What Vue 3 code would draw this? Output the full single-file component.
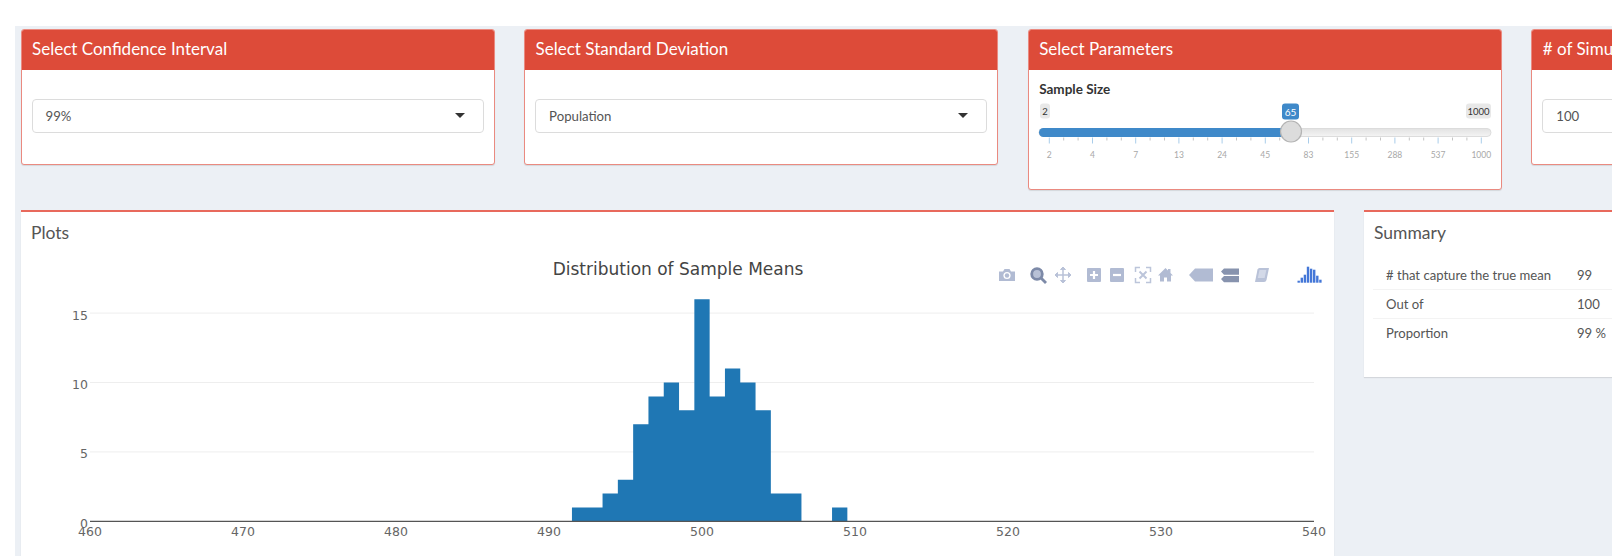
<script setup>
const inputs = [
  { title: 'Select Confidence Interval', value: '99%' },
  { title: 'Select Standard Deviation', value: 'Population' },
]
const majorLabels = ['2', '4', '7', '13', '24', '45', '83', '155', '288', '537', '1000']
const tickStep = 43.2
const tickStart = 1049.3
const sliderTicks = []
for (let i = 0; i <= 30; i++) {
  sliderTicks.push({ x: tickStart + (i * tickStep) / 3, major: i % 3 === 0 })
}
const sliderLabels = majorLabels.map((text, i) => ({ text, x: tickStart + i * tickStep }))

const rows = [
  ['# that capture the true mean', '99'],
  ['Out of', '100'],
  ['Proportion', '99 %'],
]

const X0 = 90
const XU = 15.3
const Y0 = 521.3
const YU = 13.88
const counts = [1, 1, 2, 3, 7, 9, 10, 8, 16, 9, 11, 10, 8, 2, 2, 0, 0, 1]
// one outline per run of adjacent bins, so no seams appear between bars
let barsPath = ''
let open = false
counts.forEach((c, i) => {
  const x = X0 + (31.5 + i) * XU
  if (c) {
    barsPath += `${open ? 'L' : 'M'}${x} ${open ? Y0 - c * YU : Y0}`
    if (!open) barsPath += `L${x} ${Y0 - c * YU}`
    barsPath += `L${x + XU} ${Y0 - c * YU}`
    open = true
  }
  if (open && (!c || i === counts.length - 1)) {
    const end = c ? x + XU : x
    barsPath += `L${end} ${Y0}Z`
    open = false
  }
})
const xTicks = [460, 470, 480, 490, 500, 510, 520, 530, 540].map((v) => ({
  v,
  x: X0 + (v - 460) * XU,
}))
const yTicks = [0, 5, 10, 15].map((v) => ({ v, y: Y0 - v * YU }))
const logo = [2, 5, 8, 16, 14, 13, 7, 3].map((h, i) => ({ x: 1297.5 + i * 3.1, y: 282.7 - h, h }))
</script>

<template>
  <div class="page">
    <div class="top-row">
      <section v-for="item in inputs" :key="item.title" class="box">
        <header class="box-head">{{ item.title }}</header>
        <div class="box-body">
          <div class="select">
            <span>{{ item.value }}</span>
            <i class="caret"></i>
          </div>
        </div>
      </section>

      <section class="box box-tall">
        <header class="box-head">Select Parameters</header>
        <div class="slider-body">
          <div class="slider-label">Sample Size</div>
          <svg class="slider" viewBox="1029 100 474 65" width="474" height="65">
            <defs>
              <linearGradient id="track" x1="0" y1="0" x2="0" y2="1">
                <stop offset="0" stop-color="#e2e2e2" />
                <stop offset="1" stop-color="#f4f4f4" />
              </linearGradient>
            </defs>
            <rect x="1039" y="129.5" width="452" height="8" rx="4" fill="url(#track)" stroke="#dcdcdc" />
            <rect x="1039" y="129" width="252" height="9" rx="4.5" fill="#3f89c9" />
            <line
              v-for="t in sliderTicks"
              :key="t.x"
              :x1="t.x"
              :x2="t.x"
              y1="138.5"
              :y2="t.major ? 144.5 : 141.5"
              :stroke="t.major ? '#a9cdea' : '#c4c4c4'"
            />
            <text
              v-for="l in sliderLabels"
              :key="l.text"
              :x="l.x"
              y="158.5"
              text-anchor="middle"
              class="slider-tick"
            >{{ l.text }}</text>
            <rect x="1040" y="104.5" width="10" height="15" rx="3" fill="#e8e8e8" />
            <text x="1045" y="116" text-anchor="middle" class="slider-end">2</text>
            <rect x="1466" y="104.5" width="25" height="15" rx="3" fill="#e8e8e8" />
            <text x="1478.5" y="116" text-anchor="middle" class="slider-end">1000</text>
            <rect x="1282" y="104.5" width="17" height="16" rx="3" fill="#3f89c9" />
            <text x="1290.5" y="116.5" text-anchor="middle" class="slider-value">65</text>
            <circle cx="1291" cy="132.5" r="10.5" fill="#dcdcdc" stroke="#b4b4b4" stroke-width="1.2" />
          </svg>
        </div>
      </section>

      <section class="box">
        <header class="box-head">
          <span># of Simulations</span>
        </header>
        <div class="box-body">
          <div class="select"><span>100</span></div>
        </div>
      </section>
    </div>

    <div class="bottom-row">
      <section class="panel panel-plot">
        <h3 class="panel-title">Plots</h3>
        <svg class="chart" viewBox="21 250 1313 306" width="1313" height="306">
          <text x="678" y="275" text-anchor="middle" class="chart-title">Distribution of Sample Means</text>

          <line
            v-for="t in yTicks.slice(1)"
            :key="t.v"
            x1="90"
            x2="1314"
            :y1="t.y"
            :y2="t.y"
            stroke="#eeeeee"
          />
          <path :d="barsPath" fill="#1f77b4" />
          <line x1="90" x2="1314" y1="521.3" y2="521.3" stroke="#555" stroke-width="1.2" />
          <text
            v-for="t in yTicks"
            :key="t.v"
            x="88"
            :y="t.y + 6.5"
            text-anchor="end"
            class="tick"
          >{{ t.v }}</text>
          <text
            v-for="t in xTicks"
            :key="t.v"
            :x="t.x"
            y="535.5"
            text-anchor="middle"
            class="tick"
          >{{ t.v }}</text>

          <!-- modebar -->
          <g fill="#b1bbd3">
            <path d="M999 271.5h4l1.5-2.5h5l1.5 2.5h4v9.5h-16z" />
            <circle cx="1007" cy="275.5" r="3.6" fill="#fff" />
            <circle cx="1007" cy="275.5" r="2.2" />
          </g>
          <g fill="none" stroke="#7d8aa8">
            <circle cx="1037" cy="274" r="5.3" stroke-width="2.8" fill="#b8c1d6" />
            <path d="M1041 278l5 5" stroke-width="2.8" />
          </g>
          <g fill="none" stroke="#b9c2d8" stroke-width="1.5">
            <path d="M1055.5 275h15M1063 267.5v15" />
            <path d="M1055 275l2.5-2.5v5zM1071 275l-2.5-2.5v5zM1063 267l-2.5 2.5h5zM1063 283l-2.5-2.5h5z" fill="#b9c2d8" stroke-width="1" />
          </g>
          <rect x="1087" y="268" width="14" height="14" rx="1" fill="#b1bbd3" />
          <path d="M1094 271v8M1090 275h8" stroke="#fff" stroke-width="2.2" />
          <rect x="1110" y="268" width="14" height="14" rx="1" fill="#b1bbd3" />
          <path d="M1113 275h8" stroke="#fff" stroke-width="2.2" />
          <g fill="none" stroke="#bcc5da" stroke-width="1.5">
            <path d="M1135.5 272v-4.5h4.5M1146 267.5h4.5v4.5M1150.5 278v4.5h-4.5M1140 282.5h-4.5v-4.5" />
            <path d="M1139.5 271.5l7 7M1146.5 271.5l-7 7" stroke-width="2" />
          </g>
          <path d="M1158 275.5l7.5-7.5 2.5 2.5v-1.5h2.5v4l2.5 2.5h-2v6h-4v-4h-3v4h-4v-6z" fill="#b1bbd3" />
          <path d="M1189 275l6-6.500h18v13h-18z" fill="#b1bbd3" />
          <path d="M1221 271.5l3-3h15v6.2h-15zM1221 279l3-3h15v6.2h-15z" fill="#8793ae" />
          <path d="M1257.5 269.5q.5-1.500 2-1.500h9.5l-2.500 12q-.5 2-2.500 2h-9z" fill="#b9c2d8" />
          <path d="M1259.5 270h6.8l-1.7 8h-6.8z" fill="#d3d9e8" />
          <rect
            v-for="(b, i) in logo"
            :key="i"
            :x="b.x"
            :y="b.y"
            width="2.4"
            :height="b.h"
            fill="#4477d8"
          />
        </svg>
      </section>

      <section class="panel panel-summary">
        <h3 class="panel-title">Summary</h3>
        <table class="summary">
          <tbody>
            <tr v-for="r in rows" :key="r[0]">
              <td class="name">{{ r[0] }}</td>
              <td>{{ r[1] }}</td>
            </tr>
          </tbody>
        </table>
      </section>
    </div>
  </div>
</template>

<style>
html,
body {
  margin: 0;
  background: #fff;
}
</style>

<style scoped>
.page {
  box-sizing: border-box;
  width: 1597px;
  height: 530px;
  margin: 26px 0 0 15px;
  padding: 3px 0 0 5.5px;
  background: #ecf0f5;
  overflow: hidden;
  font-family: Lato, "Noto Sans", sans-serif;
  color: #444;
}
.top-row {
  display: flex;
  align-items: flex-start;
  gap: 29.6px;
  width: 2100px;
}
.box {
  box-sizing: border-box;
  flex: none;
  width: 474px;
  height: 136px;
  background: #fff;
  border: 1px solid #ea8a80;
  border-radius: 3px;
  box-shadow: 0 1px 1px rgba(0, 0, 0, 0.1);
  overflow: hidden;
}
.box-tall {
  height: 161px;
}
.box-head {
  height: 40px;
  padding-left: 10.5px;
  background: #dd4b39;
  color: #fff;
  font-size: 17px;
  line-height: 38px;
  white-space: nowrap;
}
.box-body {
  padding: 29px 10px 0;
}
.select {
  position: relative;
  box-sizing: border-box;
  height: 34px;
  padding-left: 13px;
  border: 1px solid #dcdcdc;
  border-radius: 4px;
  background: #fff;
  color: #555;
  font-size: 13.2px;
  line-height: 32px;
}
.caret {
  position: absolute;
  top: 13px;
  right: 18px;
  width: 0;
  height: 0;
  border-left: 5px solid transparent;
  border-right: 5px solid transparent;
  border-top: 5px solid #333;
}
.slider-body {
  position: relative;
  height: 120px;
}
.slider-label {
  padding: 10px 0 0 10.5px;
  font-size: 13.5px;
  font-weight: 700;
  line-height: 18px;
  color: #333;
}
.slider {
  position: absolute;
  top: 29px;
  left: 0;
  display: block;
}
.slider-tick {
  font-size: 8.5px;
  fill: #a8a8a8;
  font-family: Lato, sans-serif;
}
.slider-end {
  font-size: 9.5px;
  fill: #333;
  font-family: Lato, sans-serif;
}
.slider-value {
  font-size: 10px;
  fill: #fff;
  font-family: Lato, sans-serif;
}
.bottom-row {
  display: flex;
  align-items: flex-start;
  gap: 30px;
  margin-top: 20px;
  margin-left: 0.5px;
  width: 1900px;
}
.panel {
  flex: none;
  box-sizing: border-box;
  border-top: 2px solid #e8695c;
  padding-top: 1px;
  background: #fff;
  box-shadow: 0 1px 1px rgba(0, 0, 0, 0.1);
}
.panel-plot {
  width: 1313px;
  height: 346px;
}
.panel-summary {
  width: 330px;
  height: 167px;
}
.panel-title {
  margin: 0;
  padding: 9px 10px 0;
  font-size: 17.5px;
  font-weight: 400;
  line-height: 22px;
  color: #555;
}
.chart {
  display: block;
  margin-top: 6px;
}
.chart-title {
  font-family: "DejaVu Sans", sans-serif;
  font-size: 17px;
  fill: #444;
}
.tick {
  font-family: "DejaVu Sans", sans-serif;
  font-size: 12.5px;
  fill: #666;
}
.summary {
  margin: 17px 0 0 9px;
  border-collapse: collapse;
  font-size: 13.1px;
  line-height: 20px;
}
.summary td {
  padding: 4px 13px;
  border-top: 1px solid #f3f3f3;
  color: #555;
  width: 60px;
}
.summary tr:first-child td {
  border-top: 0;
}
.summary td.name {
  width: 160px;
  white-space: nowrap;
}
</style>
